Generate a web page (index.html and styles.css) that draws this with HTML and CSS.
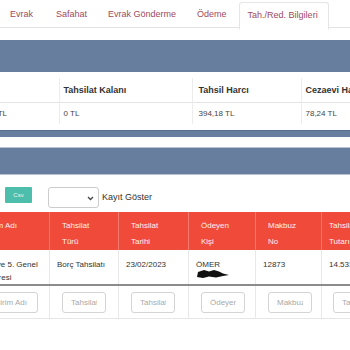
FILE: index.html
```html
<!DOCTYPE html>
<html lang="tr">
  <head>
    <meta charset="utf-8" />
    <meta name="viewport" content="width=device-width, initial-scale=1.0" />
    <title>Tahsilat / Reddiyat Bilgileri</title>
    <link rel="stylesheet" href="styles.css">
  </head>
  <body>
    <nav class="tabs">
      <ul>
        <li><a href="#">Evrak</a></li>
        <li><a href="#">Safahat</a></li>
        <li><a href="#">Evrak Gönderme</a></li>
        <li><a href="#">Ödeme</a></li>
        <li class="active"><a href="#">Tah./Red. Bilgileri</a></li>
      </ul>
    </nav>

    <div class="band"></div>

    <div class="summary">
      <table>
        <colgroup>
          <col class="s-toplam">
          <col class="s-kalan">
          <col class="s-harc">
          <col class="s-cez">
        </colgroup>
        <thead>
          <tr>
            <th class="hidden-head">Tahsilat Toplamı</th>
            <th>Tahsilat Kalanı</th>
            <th>Tahsil Harcı</th>
            <th>Cezaevi Harcı</th>
          </tr>
        </thead>
        <tbody>
          <tr>
            <td>14.533,00 TL</td>
            <td>0 TL</td>
            <td>394,18 TL</td>
            <td>78,24 TL</td>
          </tr>
        </tbody>
      </table>
    </div>

    <div class="bar"></div>
    <div class="panel-head"></div>

    <div class="toolbar">
      <button type="button" class="csv">Csv</button>
      <span class="page-size">
        <select id="page-size" name="page-size">
          <option value=""></option>
          <option value="10">10</option>
          <option value="25">25</option>
        </select>
        <svg class="chevron" width="7" height="5" viewBox="0 0 7 5">
          <path d="M1 1 L3.5 3.5 L6 1" fill="none" stroke="#444" stroke-width="1.3" />
        </svg>
      </span>
      <label for="page-size">Kayıt Göster</label>
    </div>

    <div class="grid">
      <table>
        <colgroup>
          <col class="w-birim">
          <col class="w-tur">
          <col class="w-tarih">
          <col class="w-kisi">
          <col class="w-makbuz">
          <col class="w-tutar">
        </colgroup>
        <thead>
          <tr>
            <th>Birim Adı</th>
            <th>Tahsilat<br>Türü</th>
            <th>Tahsilat<br>Tarihi</th>
            <th>Ödeyen<br>Kişi</th>
            <th>Makbuz<br>No</th>
            <th>Tahsilat<br>Tutarı</th>
          </tr>
        </thead>
        <tbody>
          <tr class="data">
            <td>Ümraniye 5. Genel<br>İcra Dairesi</td>
            <td>Borç Tahsilatı</td>
            <td>23/02/2023</td>
            <td>
              ÖMER<br>
              <svg class="redact" width="34" height="10" viewBox="0 0 34 10">
                <path d="M1 8 L2 3 L8 1 L13 2.5 L18 1 L23 2.5 L27 4.5 L33 6 L27 7 L20 8.5 L13 7.5 L7 9 Z" fill="#111" />
              </svg>
            </td>
            <td>12873</td>
            <td>14.533,00</td>
          </tr>
          <tr class="filters">
            <td><input type="text" placeholder="Birim Adı"></td>
            <td><input type="text" placeholder="Tahsilat Türü"></td>
            <td><input type="text" placeholder="Tahsilat Tarihi"></td>
            <td><input type="text" placeholder="Ödeyen Kişi"></td>
            <td><input type="text" placeholder="Makbuz No"></td>
            <td><input type="text" placeholder="Tahsilat Tutarı"></td>
          </tr>
        </tbody>
      </table>
    </div>
  </body>
</html>
```

FILE: styles.css
```css
:root {
  --slate: #677e9f;
  --tab-text: #a04a5e;
  --red: #f04a3b;
  --teal: #4dbdac;
  --text: #3a3a3a;
}

body {
  margin: 0;
  font-family: "Liberation Sans", Arial, sans-serif;
  color: var(--text);
  background-color: #ffffff;
  overflow: hidden;
}

/* tabs */
.tabs ul {
  display: flex;
  list-style: none;
  margin: 0;
  padding: 0;
  height: 27px;
  border-bottom: 1px solid #e3e3e3;
}

.tabs li {
  margin-right: 1px;
}

.tabs a {
  display: block;
  padding: 9px 10px 0;
  height: 18px;
  font-size: 9px;
  color: var(--tab-text);
  text-decoration: none;
}

.tabs li:nth-child(2) {
  margin-left: 2px;
}

.tabs li.active {
  margin-left: 1px;
}

.tabs li.active a {
  margin-top: 2px;
  padding: 7px 10px 0 8px;
  height: 19px;
  border: 1px solid #e6e6e6;
  border-bottom-color: #ffffff;
  border-radius: 3px 3px 0 0;
  background-color: #ffffff;
}

.band {
  margin-top: 12px;
  height: 32px;
  background-color: var(--slate);
}

/* summary table */
.summary {
  margin-top: 6px;
  overflow: hidden;
}

.summary table {
  border-collapse: collapse;
  table-layout: fixed;
  width: 465px;
  margin-left: -44px;
}

.s-toplam {
  width: 103px;
}

.s-kalan {
  width: 133px;
}

.s-harc {
  width: 109px;
}

.s-cez {
  width: 120px;
}

.summary th,
.summary td {
  text-align: left;
  padding: 0 4px;
  border-left: 1px solid #ececec;
  white-space: nowrap;
  overflow: hidden;
}

.summary th:first-child,
.summary td:first-child {
  border-left: none;
}

.summary th {
  height: 24px;
  font-size: 9px;
  font-weight: bold;
  color: #333333;
}

.summary th.hidden-head {
  color: transparent;
}

.summary td {
  height: 21px;
  font-size: 8px;
  color: #444444;
  border-top: 1px solid #e4e4e4;
}

.summary td:nth-child(3),
.summary th:nth-child(3) {
  padding-left: 6px;
}

.bar {
  margin-top: 6px;
  height: 6px;
  background-color: var(--slate);
  border-top: 1px solid #58708f;
}

.panel-head {
  margin-top: 10px;
  height: 26px;
  background-color: var(--slate);
  border-top: 1px solid #b7c3d2;
  border-bottom: 1px solid #b9c4d0;
}

/* toolbar */
.toolbar {
  display: flex;
  align-items: flex-start;
  gap: 3px;
  padding: 12px 0 0 5px;
  height: 25px;
}

.csv {
  width: 27px;
  height: 16px;
  padding: 0;
  margin-right: 13px;
  border: none;
  border-radius: 1px;
  background-color: var(--teal);
  color: #e8f7f4;
  font-family: "Liberation Sans", Arial, sans-serif;
  font-size: 6px;
  cursor: pointer;
}

.page-size {
  position: relative;
}

.page-size select {
  display: block;
  width: 51px;
  height: 21px;
  appearance: none;
  border: 1px solid #cccccc;
  border-radius: 3px;
  background-color: #ffffff;
}

.chevron {
  position: absolute;
  right: 5px;
  top: 9px;
}

.toolbar label {
  font-size: 9px;
  color: #333333;
  line-height: 21px;
}

/* grid */
.grid {
  overflow: hidden;
}

.grid table {
  border-collapse: collapse;
  table-layout: fixed;
  width: 410px;
  margin-left: -37px;
}

.w-birim {
  width: 86px;
}

.w-tur {
  width: 69px;
}

.w-tarih {
  width: 70px;
}

.w-kisi {
  width: 67px;
}

.w-makbuz {
  width: 66px;
}

.w-tutar {
  width: 52px;
}

.grid th {
  height: 37px;
  padding: 6px 12px 0;
  box-sizing: border-box;
  vertical-align: top;
  text-align: left;
  font-size: 8px;
  font-weight: normal;
  line-height: 16px;
  color: #fff1ee;
  background-color: var(--red);
  border-left: 1px solid #f47a6e;
  white-space: nowrap;
  overflow: hidden;
}

.grid th:first-child {
  padding-left: 21px;
}

.grid th:last-child {
  padding-left: 7px;
}

.grid td {
  vertical-align: top;
  font-size: 8px;
  border-left: 1px solid #e8e8e8;
  white-space: nowrap;
  overflow: hidden;
}

.grid tr.data td {
  height: 35px;
  box-sizing: border-box;
  padding: 8px 6px 0 7px;
  line-height: 13px;
  color: #333333;
  border-bottom: 2px solid #8c8c8c;
}

.redact {
  display: block;
  margin-top: -2px;
}

.grid tr.filters td {
  height: 33px;
  box-sizing: border-box;
  padding: 6px 12px 0;
  border-bottom: 1px solid #e6e6e6;
}

.grid tr.filters td:last-child {
  padding-left: 11px;
}

.grid tr.filters input {
  display: block;
  width: 44px;
  height: 21px;
  box-sizing: border-box;
  padding: 0 8px;
  border: 1px solid #d4d4d4;
  border-radius: 3px;
  font-family: "Liberation Sans", Arial, sans-serif;
  font-size: 8px;
}

.grid tr.filters td:first-child input {
  width: 62px;
  margin-left: auto;
  padding-right: 10px;
  text-align: right;
}

.grid input::placeholder {
  color: #a9a9a9;
}
```
